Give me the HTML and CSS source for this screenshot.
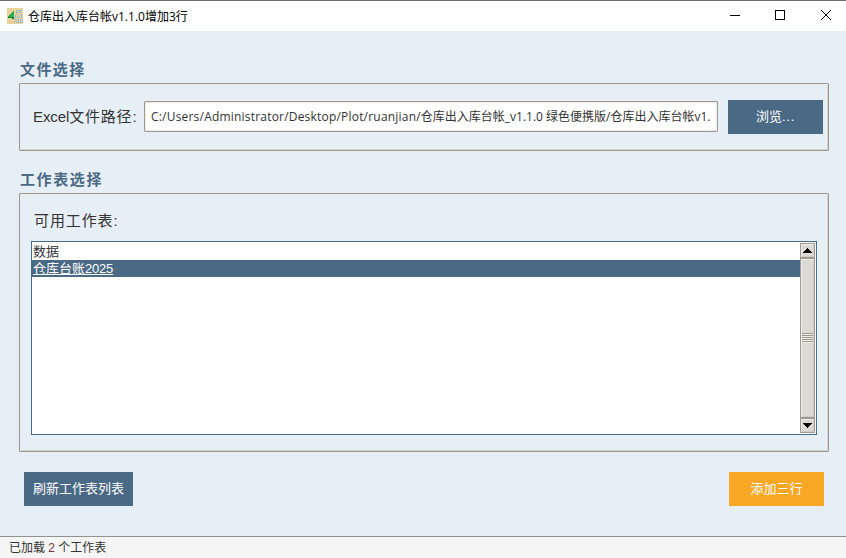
FILE: index.html
```html
<!DOCTYPE html>
<html lang="zh-CN">
    <head>
        <meta charset="utf-8">
        <title>仓库出入库台帐v1.1.0增加3行</title>
        <link rel="stylesheet" href="styles.css">
    </head>

    <body>
        <div class="titlebar">
            <svg class="appIcon" width="16" height="16" viewBox="0 0 16 16" shape-rendering="crispEdges">
                <rect width="16" height="16" fill="#ead29a"/>
                <path d="M1 9L7 2V9Z" fill="#2fae5a"/>
                <path d="M1 9H7V11H5V10H1Z" fill="#157a3a"/>
                <path d="M9 2h1v4h-1zM11 2h4v1h-4zM11 4h3v1h-3zM8 7h1v3h-1zM10 7h1v2h2v1h-3zM14 6h1v4h-1zM7 11h3v1h-3zM7 13h1v2h-1zM9 13h1v2h-1zM11 11h1v4h-1zM13 11h2v1h-2zM13 13h1v2h-1zM15 12h1v3h-1z" fill="#8db9d8"/>
            </svg>
            <span class="titleText">仓库出入库台帐<span class="latin">v1.1.0</span>增加<span class="latin">3</span>行</span>
            <svg class="windowButtons" width="138" height="29" viewBox="0 0 138 29" fill="none" stroke="#000">
                <path d="M22 14.5H32"/>
                <rect x="67.5" y="9.5" width="9" height="9"/>
                <path d="M113 9L123 19M123 9L113 19"/>
            </svg>
        </div>

        <div class="main">
            <h2 class="groupTitle">文件选择</h2>
            <div class="group fileGroup">
                <label class="fileLabel" for="path"><span class="excel">Excel</span>文件路径:</label>
                <div class="entry" id="path"><span class="pathText">C:/Users/Administrator/Desktop/Plot/ruanjian/</span>仓库出入库台帐<span class="latin">_v1.1.0 </span>绿色便携版<span class="latin">/</span>仓库出入库台帐<span class="latin">v1.</span></div>
                <button type="button" class="button browse">浏览<span class="dots">...</span></button>
            </div>

            <h2 class="groupTitle sheetTitle">工作表选择</h2>
            <div class="group sheetGroup">
                <p class="sheetLabel">可用工作表:</p>
                <div class="listbox">
                    <ul class="sheets">
                        <li>数据</li>
                        <li class="selected">仓库台账<span class="year">2025</span></li>
                    </ul>
                    <div class="scrollbar">
                        <div class="arrow">
                            <svg width="9" height="5" viewBox="0 0 9 5" shape-rendering="crispEdges"><path d="M4 0h1v1h1v1h1v1h1v1h1v1h-9v-1h1v-1h1v-1h1v-1h1z"/></svg>
                        </div>
                        <div class="thumb"><div class="grip"></div></div>
                        <div class="arrow">
                            <svg width="9" height="5" viewBox="0 0 9 5" shape-rendering="crispEdges"><path d="M0 0h9v1h-1v1h-1v1h-1v1h-1v1h-1v-1h-1v-1h-1v-1h-1v-1h-1z"/></svg>
                        </div>
                    </div>
                </div>
            </div>

            <div class="actions">
                <button type="button" class="button refresh">刷新工作表列表</button>
                <button type="button" class="button add">添加三行</button>
            </div>
        </div>

        <div class="statusbar">已加载 <span class="count">2</span> 个工作表</div>
    </body>
</html>
```

FILE: styles.css
```css
* {
    box-sizing: border-box;
    margin: 0;
    padding: 0;
}
body {
    width: 846px;
    height: 558px;
    display: flex;
    flex-direction: column;
    overflow: hidden;
    background-color: #e7eff6;
    color: #333;
    font-family: "Liberation Sans", "Noto Sans CJK SC", sans-serif;
    white-space: nowrap;
}
.titlebar {
    height: 31px;
    display: flex;
    align-items: center;
    padding-left: 7px;
    border-top: 1px solid #6e6e6e;
    background-color: #fff;
    color: #000;
}
.titleText {
    margin-left: 5px;
    flex: 1;
    font-size: 12px;
    line-height: 18px;
    font-family: "Noto Sans CJK SC", sans-serif;
}
.latin {
    font-family: "Open Sans", sans-serif;
    font-size: 12px;
}
.windowButtons {
    align-self: flex-start;
}
.main {
    flex: 1;
    padding: 28px 17px 0 19px;
}
.groupTitle {
    height: 24px;
    padding-left: 1px;
    color: #4a6984;
    font-size: 15px;
    line-height: 22px;
    letter-spacing: 1.4px;
}
.sheetTitle {
    letter-spacing: 1.6px;
}
.group {
    border: 1px solid #9e9a91;
    border-radius: 1px;
    box-shadow: inset 1px 1px #eeebe7, inset -1px -1px #d5d0c8;
    width: 810px;
}
.fileGroup {
    display: flex;
    align-items: flex-start;
    height: 68px;
    padding: 16px 5px 0 13px;
    margin-bottom: 18px;
}
.fileLabel {
    width: 111px;
    font-size: 15px;
    line-height: 34px;
    letter-spacing: 0.8px;
}
.excel {
    letter-spacing: -0.1px;
}
.entry {
    width: 574px;
    height: 31px;
    margin: 1px 10px 0 0;
    padding-left: 6px;
    overflow: hidden;
    border: 1px solid #9e9a91;
    border-radius: 1px;
    box-shadow: inset 1px 1px #eeebe7, inset -1px -1px #eeebe7;
    background-color: #fff;
    font-family: "Noto Sans CJK SC", sans-serif;
    font-size: 12px;
    line-height: 28px;
}
.pathText {
    font-family: "Open Sans", sans-serif;
    font-size: 12px;
    letter-spacing: 0.2px;
}
.button {
    height: 34px;
    border: 0;
    background-color: #4a6984;
    color: #fff;
    font-family: "Liberation Sans", "Noto Sans CJK SC", sans-serif;
    font-size: 13px;
    line-height: 34px;
}
.browse {
    width: 95px;
}
.dots {
    letter-spacing: 0.7px;
}
.sheetGroup {
    height: 259px;
    padding: 14px 11px 0;
}
.sheetLabel {
    height: 33px;
    padding-left: 3px;
    font-size: 15px;
    line-height: 26px;
    letter-spacing: 0.9px;
}
.listbox {
    display: flex;
    justify-content: space-between;
    width: 786px;
    height: 194px;
    padding: 1px;
    border: 1px solid #4a6984;
    background-color: #fff;
}
.sheets {
    flex: 1;
    margin-left: -1px;
    list-style: none;
    font-size: 13px;
}
.sheets li {
    height: 17px;
    padding-left: 1px;
    line-height: 17px;
}
.sheets .selected {
    background-color: #4a6984;
    color: #fff;
    text-decoration: underline;
}
.year {
    letter-spacing: -0.2px;
}
.scrollbar {
    display: flex;
    flex-direction: column;
    width: 15px;
    height: 190px;
    border: 1px solid #9e9a91;
    background-color: #9e9a91;
    gap: 2px;
}
.arrow, .thumb {
    display: flex;
    align-items: center;
    justify-content: center;
    background-color: #dcdad5;
    box-shadow: inset 1px 1px #eeebe7, inset -1px -1px #cfcdc8;
}
.arrow {
    height: 13px;
}
.thumb {
    flex: 1;
}
.grip {
    width: 11px;
    height: 10px;
    background: repeating-linear-gradient(#9e9a91 0 1px, #eeebe7 1px 2px);
}
.actions {
    display: flex;
    justify-content: space-between;
    padding: 20px 5px 0;
}
.refresh {
    width: 109px;
}
.add {
    width: 95px;
    background-color: #f9a825;
}
.statusbar {
    height: 22px;
    padding-left: 9px;
    border-top: 1px solid #919191;
    background-color: #f5f5f5;
    font-size: 12px;
    line-height: 22px;
}
.count {
    color: #803040;
}
```
